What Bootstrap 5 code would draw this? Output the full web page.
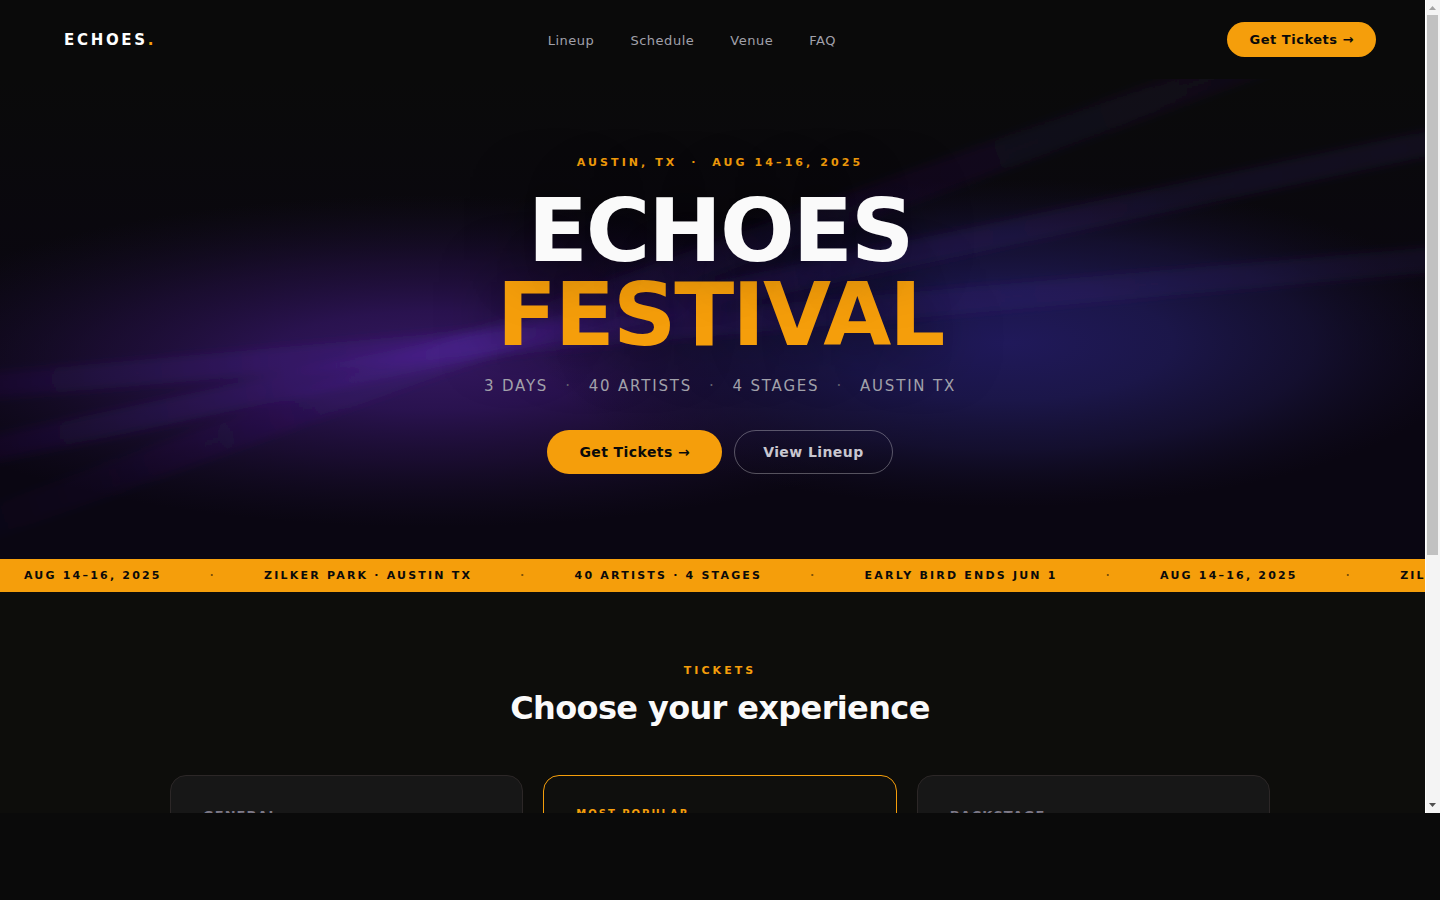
<!DOCTYPE html>
<html lang="en">
<head>
<meta charset="utf-8">
<meta name="viewport" content="width=device-width, initial-scale=1">
<title>Echoes Festival</title>
<link href="https://cdn.jsdelivr.net/npm/bootstrap@5.3.0/dist/css/bootstrap.min.css" rel="stylesheet">
<style>
  :root { --amber: #f59e0b; --ink: #0a0a0a; }
  body { background: var(--ink); color: #fafafa; font-family: "DejaVu Sans", sans-serif; line-height: normal; }
  a { text-decoration: none; }

  .window-frame { height: calc(100vh - 87px); }

  .site-nav { background: var(--ink); padding: 22px 64px; z-index: 2; }
  .brand { font-size: 15px; font-weight: 700; letter-spacing: .18em; color: #fff; }
  .brand span { color: var(--amber); }
  .site-links { gap: 36px; font-size: 13px; letter-spacing: .04em; padding-top: 2px; }
  .site-links a { color: #a1a1aa; }

  .pill { --bs-btn-font-weight: 700; --bs-btn-line-height: normal; --bs-btn-border-width: 0; letter-spacing: .04em; border-radius: 99px; }
  .pill-amber { --bs-btn-bg: var(--amber); --bs-btn-color: #0a0a0a; --bs-btn-hover-bg: #fbb02d; --bs-btn-hover-color: #0a0a0a; }
  .pill-nav { --bs-btn-font-size: 13px; --bs-btn-padding-x: 22px; --bs-btn-padding-y: 10px; }
  .pill-hero { --bs-btn-font-size: 14px; --bs-btn-padding-x: 32px; --bs-btn-padding-y: 14px; letter-spacing: .03em; }
  .pill-ghost { --bs-btn-font-size: 14px; --bs-btn-padding-x: 28px; --bs-btn-padding-y: 13px; --bs-btn-border-width: 1px; --bs-btn-border-color: rgba(255,255,255,.3); --bs-btn-color: #c9c7d0; --bs-btn-hover-color: #fff; --bs-btn-hover-border-color: #fff; letter-spacing: .03em; }

  .hero { height: 480px; padding-top: 77px; background: linear-gradient(#0a0a0a 0%, #0a0612 60%, #0a0612 100%); }
  .hero-stage { inset: 0; width: 100%; height: 100%; }
  .eyebrow { color: var(--amber); font-size: 11px; font-weight: 700; letter-spacing: .28em; line-height: 13px; }
  .hero-title { font-size: 88px; font-weight: 700; line-height: 84px; letter-spacing: -2px; text-shadow: 0 0 60px rgba(0,0,0,.6); margin: 20px 0; }
  .hero-title span { display: block; }
  .hero-title .lead-word { position: relative; z-index: 1; }
  .hero-title .accent { color: var(--amber); }
  .facts { font-size: 15px; letter-spacing: .12em; line-height: 18px; color: #a1a1aa; gap: 17px; margin-bottom: 35px; }
  .facts i { color: #63616e; font-style: normal; }
  .actions { gap: 12px; }

  .ticker { background: var(--amber); color: #0a0a0a; font-size: 11px; font-weight: 700; letter-spacing: .2em; line-height: 13px; padding: 10px 0; }
  .ticker span { padding: 0 24px; flex: none; }
  .ticker .sep { opacity: .5; }

  .tickets { background: #0d0d0b; padding: 72px 24px; height: 100%; }
  .tickets h2 { font-size: 32px; font-weight: 700; letter-spacing: -.02em; line-height: 38px; margin: 12px 0 48px; }
  .tier-row { max-width: 1120px; --bs-gutter-x: 20px; }
  .tier { background: #171717; border: 1px solid #2c2727; border-radius: 16px; padding: 32px; height: 320px; }
  .tier-top { background: #0f0f0d; border-color: var(--amber); }
  .tier-name { color: #7d7987; font-size: 13px; font-weight: 700; letter-spacing: .08em; line-height: 16px; }
  .tier-flag { color: var(--amber); font-size: 10px; font-weight: 700; letter-spacing: .2em; line-height: 12px; margin-bottom: 12px; }

  .scroll-rail { top: 0; right: 0; width: 15px; height: 100%; background: #f4f4f4; border-left: 1px solid #fff; padding: 0 2px 0 1px; z-index: 3; }
  .scroll-rail svg { width: 11px; height: 15px; flex: none; }
  .scroll-track { flex: 1; }
  .scroll-thumb { height: 69%; background: #c1c1c1; }
</style>
</head>
<body>
<div class="window-frame position-relative overflow-hidden d-flex flex-column">
  <nav class="site-nav position-relative d-flex justify-content-between align-items-center flex-shrink-0">
    <a href="#" class="brand">ECHOES<span>.</span></a>
    <div class="site-links d-flex">
      <a href="#">Lineup</a><a href="#">Schedule</a><a href="#">Venue</a><a href="#">FAQ</a>
    </div>
    <button type="button" class="btn pill pill-amber pill-nav">Get Tickets →</button>
  </nav>

  <header class="hero position-relative overflow-hidden flex-shrink-0">
    <svg class="hero-stage position-absolute" viewBox="0 0 1440 480" preserveAspectRatio="none" aria-hidden="true">
      <defs>
        <radialGradient id="glowL"><stop offset="0" stop-color="#34185f"/><stop offset=".3" stop-color="#2b1352" stop-opacity=".95"/><stop offset=".6" stop-color="#22103f" stop-opacity=".65"/><stop offset="1" stop-color="#180f2c" stop-opacity="0"/></radialGradient>
        <radialGradient id="glowR"><stop offset="0" stop-color="#20195a"/><stop offset=".35" stop-color="#1c174c" stop-opacity=".95"/><stop offset=".65" stop-color="#171238" stop-opacity=".75"/><stop offset="1" stop-color="#120d26" stop-opacity="0"/></radialGradient>
        <linearGradient id="ray"><stop offset="0" stop-color="#4c2099" stop-opacity="0"/><stop offset=".14" stop-color="#4c2099" stop-opacity=".14"/><stop offset=".37" stop-color="#5223a0" stop-opacity=".32"/><stop offset=".6" stop-color="#43238c" stop-opacity=".2"/><stop offset="1" stop-color="#43238c" stop-opacity=".12"/></linearGradient>
        <filter id="soft" x="-5%" y="-80%" width="110%" height="260%"><feGaussianBlur stdDeviation="5"/></filter>
      </defs>
      <ellipse cx="432" cy="282" rx="560" ry="166" fill="url(#glowL)"/>
      <ellipse cx="1008" cy="264" rx="470" ry="164" fill="url(#glowR)"/>
      <g fill="url(#ray)" filter="url(#soft)">
        <rect x="-200" y="251" width="1800" height="26" transform="rotate(-5 480 264)"/>
        <rect x="-200" y="253" width="1800" height="26" transform="rotate(-12 480 264)"/>
        <rect x="-120" y="249" width="1720" height="32" opacity=".6" transform="rotate(-20 480 264)"/>
      </g>
    </svg>
    <div class="position-relative d-flex flex-column align-items-center">
      <div class="eyebrow">AUSTIN, TX &nbsp;·&nbsp; AUG 14–16, 2025</div>
      <h1 class="hero-title text-center"><span class="lead-word">ECHOES</span><span class="accent">FESTIVAL</span></h1>
      <div class="facts d-flex"><span>3 DAYS</span><i>·</i><span>40 ARTISTS</span><i>·</i><span>4 STAGES</span><i>·</i><span>AUSTIN TX</span></div>
      <div class="actions d-flex">
        <button type="button" class="btn pill pill-amber pill-hero">Get Tickets →</button>
        <button type="button" class="btn pill pill-ghost">View Lineup</button>
      </div>
    </div>
  </header>

  <div class="ticker d-flex text-nowrap overflow-hidden flex-shrink-0">
    <span>AUG 14–16, 2025</span><span class="sep">·</span><span>ZILKER PARK · AUSTIN TX</span><span class="sep">·</span><span>40 ARTISTS · 4 STAGES</span><span class="sep">·</span><span>EARLY BIRD ENDS JUN 1</span><span class="sep">·</span><span>AUG 14–16, 2025</span><span class="sep">·</span><span>ZILKER</span>
  </div>

  <section class="tickets text-center">
    <div class="eyebrow">TICKETS</div>
    <h2>Choose your experience</h2>
    <div class="row row-cols-3 tier-row mx-auto text-start">
      <div class="col"><div class="tier"><div class="tier-name">GENERAL</div></div></div>
      <div class="col"><div class="tier tier-top"><div class="tier-flag">MOST POPULAR</div></div></div>
      <div class="col"><div class="tier"><div class="tier-name">BACKSTAGE</div></div></div>
    </div>
  </section>

  <div class="scroll-rail position-absolute d-flex flex-column" aria-hidden="true">
    <svg viewBox="0 0 11 15"><path d="M2 10 5.500 6 9 10z" fill="#a3a3a3"/></svg>
    <div class="scroll-track"><div class="scroll-thumb"></div></div>
    <svg viewBox="0 0 11 15"><path d="M2 5 5.500 9 9 5z" fill="#505050"/></svg>
  </div>
</div>
<script src="https://cdn.jsdelivr.net/npm/bootstrap@5.3.0/dist/js/bootstrap.bundle.min.js"></script>
</body>
</html>
